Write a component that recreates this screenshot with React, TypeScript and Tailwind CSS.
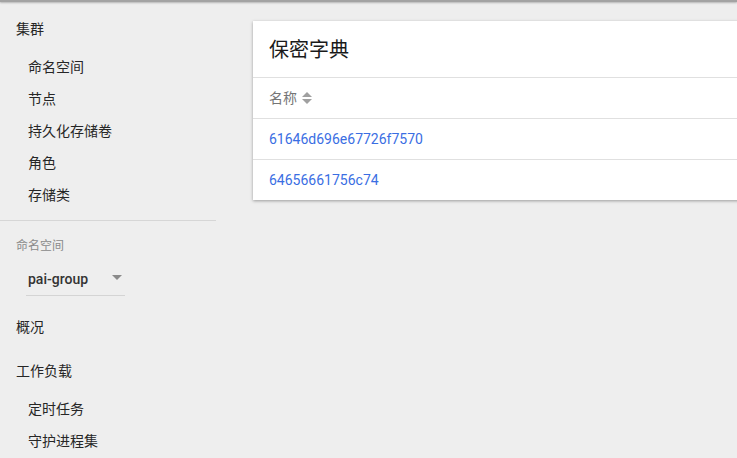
import React from "react";

const font = { fontFamily: 'Roboto, "Noto Sans CJK SC", sans-serif' };

function SortIcon() {
  return (
    <svg width="12" height="14" viewBox="0 0 12 14" className="ml-[4px]">
      <path d="M1 6 L6 1 L11 6 Z" fill="#a0a0a0" />
      <path d="M1 8 L6 13 L11 8 Z" fill="#a0a0a0" />
    </svg>
  );
}

function SubItem({ children }: { children: React.ReactNode }) {
  return <div className="h-8 flex items-center pl-[28px] text-[14px] text-[#262626]">{children}</div>;
}

export default function App() {
  return (
    <div
      className="w-full h-[458px] overflow-hidden bg-[#eeeeee] flex flex-col"
      style={font}
    >
      <div className="h-[2px] bg-[#a3a3a3] shadow-[0_1px_2px_rgba(0,0,0,0.25)] shrink-0 relative z-10" />
      <div className="flex flex-1 min-h-0">
        <aside className="w-[216px] shrink-0 flex flex-col">
          <div className="mt-[11px] h-8 flex items-center pl-4 text-[14px] text-[#262626]">集群</div>
          <div className="mt-[6px] flex flex-col">
            <SubItem>命名空间</SubItem>
            <SubItem>节点</SubItem>
            <SubItem>持久化存储卷</SubItem>
            <SubItem>角色</SubItem>
            <SubItem>存储类</SubItem>
          </div>
          <div className="mt-[9px] h-px bg-[#d6d6d6]" />
          <div className="mt-[15px] h-5 flex items-center pl-4 text-[12px] text-[#8a8a8a]">命名空间</div>
          <div className="mt-[8px] ml-[26px] w-[99px] h-8 border-b border-[#d4d4d4] flex items-center justify-between pl-[2px] pr-[2px]">
            <span className="text-[14px] font-medium text-[#333333]">pai-group</span>
            <svg width="10" height="6" viewBox="0 0 10 6" className="mr-[1px] -mt-[3px]">
              <path d="M0 0 L10 0 L5 5 Z" fill="#8a8a8a" />
            </svg>
          </div>
          <div className="mt-[15px] h-8 flex items-center pl-4 text-[14px] text-[#262626]">概况</div>
          <div className="mt-[12px] h-8 flex items-center pl-4 text-[14px] text-[#262626]">工作负载</div>
          <div className="mt-[6px] flex flex-col">
            <SubItem>定时任务</SubItem>
            <SubItem>守护进程集</SubItem>
          </div>
        </aside>
        <main className="flex-1 min-w-0 overflow-hidden pl-[37px] pt-[19px]">
          <div className="w-[520px] bg-white shadow-[0_1px_3px_rgba(0,0,0,0.35)]">
            <div className="h-[57px] flex items-center pl-4 pt-[1px] text-[20px] text-[#1a1a1a] border-b border-[#e0e0e0]">
              保密字典
            </div>
            <div className="h-[41px] flex items-center pl-4 text-[14px] text-[#757575] border-b border-[#e0e0e0]">
              名称
              <SortIcon />
            </div>
            <div className="h-[41px] flex items-center pl-4 text-[14px] text-[#3a6ee3] border-b border-[#e0e0e0]">
              61646d696e67726f7570
            </div>
            <div className="h-[40px] flex items-center pl-4 text-[14px] text-[#3a6ee3]">
              64656661756c74
            </div>
          </div>
        </main>
      </div>
    </div>
  );
}
